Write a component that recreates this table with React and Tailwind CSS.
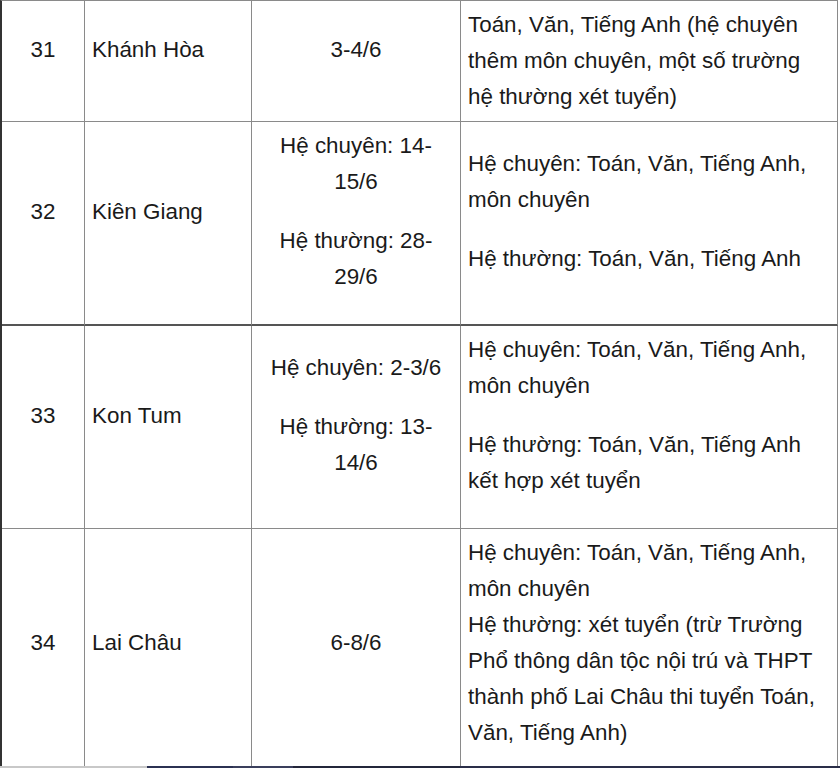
const rows = [
  {
    no: '31',
    name: 'Khánh Hòa',
    dates: ['3-4/6'],
    subjects: null,
    subjectsPlain: 'Toán, Văn, Tiếng Anh (hệ chuyên thêm môn chuyên, một số trường hệ thường xét tuyển)',
    border: 'border-b border-[#8a8a8a]',
  },
  {
    no: '32',
    name: 'Kiên Giang',
    dates: ['Hệ chuyên: 14-15/6', 'Hệ thường: 28-29/6'],
    subjects: [['Hệ chuyên: Toán, Văn, Tiếng Anh, môn chuyên'], ['Hệ thường: Toán, Văn, Tiếng Anh']],
    border: 'border-b-2 border-[#555]',
  },
  {
    no: '33',
    name: 'Kon Tum',
    dates: ['Hệ chuyên: 2-3/6', 'Hệ thường: 13-14/6'],
    subjects: [['Hệ chuyên: Toán, Văn, Tiếng Anh, môn chuyên'], ['Hệ thường: Toán, Văn, Tiếng Anh kết hợp xét tuyển']],
    border: 'border-b border-[#8a8a8a]',
  },
  {
    no: '34',
    name: 'Lai Châu',
    dates: ['6-8/6'],
    subjects: [
      [
        'Hệ chuyên: Toán, Văn, Tiếng Anh, môn chuyên',
        'Hệ thường: xét tuyển (trừ Trường Phổ thông dân tộc nội trú và THPT thành phố Lai Châu thi tuyển Toán, Văn, Tiếng Anh)',
      ],
    ],
    border: 'border-b border-[#8a8a8a]',
  },
];

function Cell({ className = '', children }) {
  return (
    <div className={`flex flex-col justify-center py-[6px] border-r border-r-[#8a8a8a] ${className}`}>
      {children}
    </div>
  );
}

export default function App() {
  return (
    <div className="h-[768px] w-[840px] overflow-hidden bg-white">
      <div className="h-[766px] overflow-hidden">
        <div
          className="grid w-[838px] grid-cols-[83px_167px_209px_377px] border-l-2 border-t border-l-[#333] border-t-[#8a8a8a] text-[22.4px] leading-[36px] text-[#1a1a1a]"
          style={{ fontFamily: '"Liberation Sans", Arial, sans-serif' }}
        >
          {rows.map((r) => (
            <div key={r.no} className="contents">
              <Cell className={`items-center px-2 text-center ${r.border}`}>
                <p className="mb-[23px]">{r.no}</p>
              </Cell>
              <Cell className={`px-[7px] ${r.border}`}>
                <p className="mb-[23px]">{r.name}</p>
              </Cell>
              <Cell className={`px-2 text-center ${r.border}`}>
                {r.dates.map((d) => (
                  <p key={d} className="mb-[23px]">{d}</p>
                ))}
              </Cell>
              <Cell className={`px-[7px] ${r.border}`}>
                {r.subjects
                  ? r.subjects.map((para, i) => (
                      <p key={i} className="mb-[23px]">
                        {para.map((line, j) => (
                          <span key={j}>
                            {j > 0 && <br />}
                            {line}
                          </span>
                        ))}
                      </p>
                    ))
                  : <p>{r.subjectsPlain}</p>}
              </Cell>
            </div>
          ))}
        </div>
      </div>
      <div className="flex h-[2px]">
        <div className="w-[147px] bg-[#c8c8c8]" />
        <div className="w-[86px] bg-[#2b3152]" />
        <div className="w-[60px] bg-[#3a3f5c]" />
        <div className="w-[167px] bg-[#23263a]" />
        <div className="flex-1 bg-[#2a2e48]" />
      </div>
    </div>
  );
}
